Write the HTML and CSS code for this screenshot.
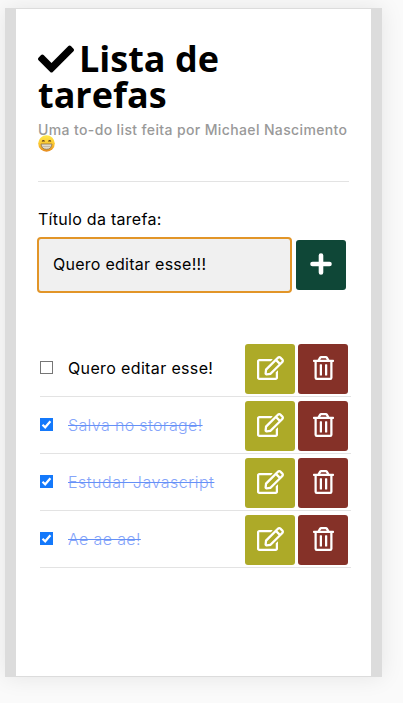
FILE: index.html
```
<!DOCTYPE html>
<html lang="pt-BR">
<head>
<meta charset="utf-8">
<title>Lista de tarefas</title>
<link rel="stylesheet" href="styles.css">
</head>
<body>
<svg class="defs" width="0" height="0">
  <symbol id="edit" viewBox="0 0 576 512"><path fill="#fff" d="M402.3 344.9l32-32c5-5 13.7-1.5 13.7 5.7V464c0 26.5-21.5 48-48 48H48c-26.5 0-48-21.5-48-48V112c0-26.5 21.5-48 48-48h273.500c7.100 0 10.700 8.600 5.700 13.700l-32 32c-1.500 1.500-3.500 2.300-5.700 2.300H48v352h352V350.500c0-2.100.8-4.100 2.300-5.600zm156.600-201.800L296.300 405.700l-90.400 10c-26.200 2.900-48.500-19.200-45.600-45.600l10-90.400L432.900 17.100c22.900-22.900 59.900-22.900 82.700 0l43.200 43.200c22.900 22.900 22.900 60 .1 82.800zM460.100 174L402 115.900 216.200 301.800l-7.300 65.300 65.300-7.300L460.100 174zm64.800-79.700l-43.200-43.200c-4.100-4.100-10.800-4.100-14.800 0L436 82l58.100 58.100 30.900-30.900c4-4.200 4-10.800-.1-14.900z"/></symbol>
  <symbol id="trash" viewBox="0 0 448 512"><path fill="#fff" d="M268 416h24a12 12 0 0 0 12-12V188a12 12 0 0 0-12-12h-24a12 12 0 0 0-12 12v216a12 12 0 0 0 12 12zM432 80h-82.410l-34-56.700A48 48 0 0 0 274.410 0H173.590a48 48 0 0 0-41.160 23.300L98.410 80H16A16 16 0 0 0 0 96v16a16 16 0 0 0 16 16h16v336a48 48 0 0 0 48 48h288a48 48 0 0 0 48-48V128h16a16 16 0 0 0 16-16V96a16 16 0 0 0-16-16zM171.840 50.910A6 6 0 0 1 177 48h94a6 6 0 0 1 5.150 2.910L293.610 80H154.390zM368 464H80V128h288zm-212-48h24a12 12 0 0 0 12-12V188a12 12 0 0 0-12-12h-24a12 12 0 0 0-12 12v216a12 12 0 0 0 12 12z"/></symbol>
  <symbol id="tick" viewBox="0 0 13 13"><path d="M2.500 6.800 5.200 9.300 10.400 3.300" fill="none" stroke="#fff" stroke-width="2.200"/></symbol>
</svg>
<main class="card">
  <header>
    <h1><svg class="check" width="36" height="36" viewBox="0 0 512 512"><path d="M173.898 439.404l-166.400-166.400c-9.997-9.997-9.997-26.206 0-36.204l36.203-36.204c9.997-9.998 26.207-9.998 36.204 0L192 312.690 432.095 72.596c9.997-9.997 26.207-9.997 36.204 0l36.203 36.204c9.997 9.997 9.997 26.206 0 36.204l-294.400 294.401c-9.998 9.997-26.207 9.997-36.204-.001z"/></svg>Lista de<br>tarefas</h1>
    <p class="sub">Uma to-do list feita por Michael Nascimento</p>
    <svg class="emoji" width="17" height="17" viewBox="0 0 17 17" role="img" aria-label="😁">
      <defs><linearGradient id="g" x1="0" y1="0" x2="0" y2="1"><stop offset="0" stop-color="#ffe94d"/><stop offset=".55" stop-color="#fbc52e"/><stop offset="1" stop-color="#e5881f"/></linearGradient></defs>
      <circle cx="8.500" cy="8.500" r="8.300" fill="url(#g)"/>
      <path d="M4.200 6.500Q5.300 4.600 6.500 6.500M10.500 6.500Q11.700 4.600 12.800 6.500" fill="none" stroke="#65401a" stroke-width="1.300"/>
      <path d="M3 9H14Q13.500 14.300 8.500 14.300T3 9Z" fill="#e2dccb" stroke="#8d724b" stroke-width=".8"/>
      <path d="M4 11.500H13" stroke="#b5a68c" stroke-width=".6"/>
    </svg>
  </header>
  <form class="form">
    <label class="label">Título da tarefa:</label>
    <div class="entry">
      <div class="input">Quero editar esse!!!</div>
      <button type="button" class="btn add"><svg width="22" height="22" viewBox="0 0 22 22"><path d="M11 2.500V19.500M2.500 11H19.500" stroke="#fff" stroke-width="4.600" stroke-linecap="round"/></svg></button>
    </div>
  </form>
  <ul class="list">
    <li><span class="box"></span><span class="name"><span class="task">Quero editar esse!</span></span><button class="btn edit"><svg width="27" height="24"><use href="#edit"/></svg></button><button class="btn del"><svg width="21" height="24"><use href="#trash"/></svg></button></li>
    <li class="done"><span class="box"><svg width="13" height="13"><use href="#tick"/></svg></span><span class="name"><span class="task">Salva no storage!</span></span><button class="btn edit"><svg width="27" height="24"><use href="#edit"/></svg></button><button class="btn del"><svg width="21" height="24"><use href="#trash"/></svg></button></li>
    <li class="done"><span class="box"><svg width="13" height="13"><use href="#tick"/></svg></span><span class="name"><span class="task wide">Estudar Javascript</span></span><button class="btn edit"><svg width="27" height="24"><use href="#edit"/></svg></button><button class="btn del"><svg width="21" height="24"><use href="#trash"/></svg></button></li>
    <li class="done"><span class="box"><svg width="13" height="13"><use href="#tick"/></svg></span><span class="name"><span class="task">Ae ae ae!</span></span><button class="btn edit"><svg width="27" height="24"><use href="#edit"/></svg></button><button class="btn del"><svg width="21" height="24"><use href="#trash"/></svg></button></li>
  </ul>
</main>
</body>
</html>
```
FILE: styles.css
```
* { box-sizing: border-box; }
html, body { margin: 0; height: 703px; overflow: hidden; }
body { background: #fafafa; padding: 8px 0 0 5px; font-family: Inter, "Liberation Sans", sans-serif; font-size: 16px; color: #000; }
.defs { position: absolute; }
.card { width: 377px; height: 669px; background: #fff; border: 1px solid #dcdcdc; border-width: 1px 11px; padding: 0 21px 0 22px; box-shadow: 0 0 22px rgba(0,0,0,.09); }
header { height: 173px; border-bottom: 1px solid #e3e3e3; padding-top: 32px; margin-right: 1px; }
h1 { margin: 0; font: bold 36px/36px "Open Sans", "Noto Sans", sans-serif; height: 72px; white-space: nowrap; }
.check { display: inline-block; margin: -5px 5px -5px 0; vertical-align: 0; }
.sub { margin: 8px 0 0; height: 14px; line-height: 18px; font-size: 14px; font-weight: 500; letter-spacing: .37px; color: #999; white-space: nowrap; }
.emoji { display: block; }
.form { padding-top: 26px; }
.label { display: block; height: 29px; line-height: 22px; letter-spacing: .28px; }
.entry { display: flex; align-items: center; gap: 4px; margin-left: -1px; }
.input { width: 255px; height: 56px; border: 2px solid #e29528; border-radius: 4px; background: #f0f0f0; padding-left: 14px; line-height: 50px; letter-spacing: .26px; white-space: nowrap; }
.btn { width: 50px; height: 50px; border: 0; border-radius: 3px; padding: 0; display: flex; align-items: center; justify-content: center; flex: none; }
.add { background: #0f4737; }
.add svg { margin-bottom: 2px; }
.edit { background: #adaa28; }
.del { background: #853128; margin-left: 3px; }
.list .btn { margin-top: 4px; padding-bottom: 2px; }
.list { list-style: none; margin: 47px -1px 0 2px; padding: 0; }
.list li { height: 57px; border-bottom: 1px solid #e3e3e3; display: flex; align-items: center; padding: 0 3px 2px 0; }
.box { width: 13px; height: 13px; border: 1px solid #767676; margin-right: 15px; flex: none; }
.done .box { border: 0; background: #1479fb; }
.box svg { display: block; }
.name { flex: 1; white-space: nowrap; line-height: 22px; padding-top: 2px; }
.task { letter-spacing: .36px; }
.done .task { color: #86a5fa; text-decoration: line-through #6490f7 1px; font-weight: 300; }
.done .wide { letter-spacing: .52px; }
```
